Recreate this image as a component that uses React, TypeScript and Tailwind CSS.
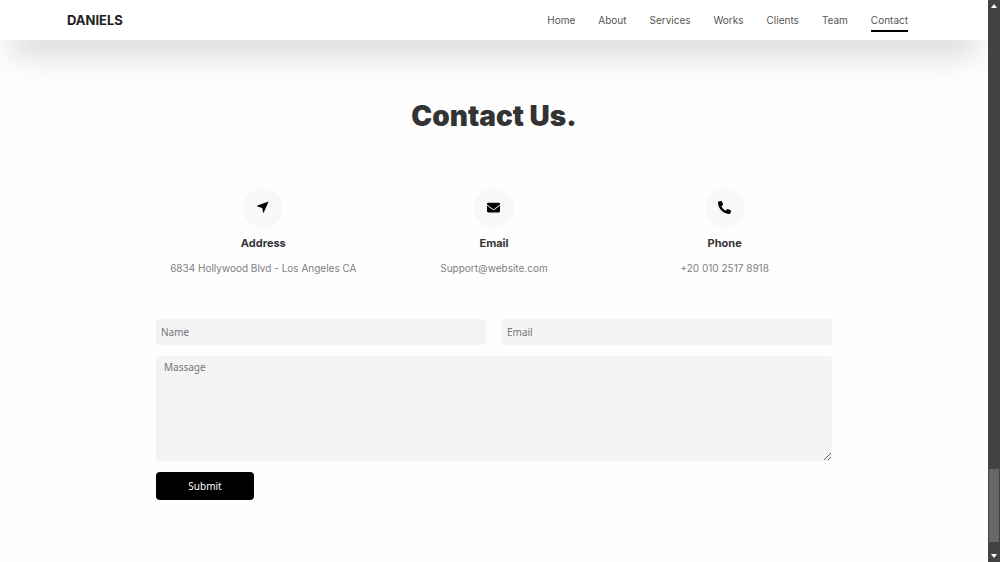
import type { ReactNode } from "react"
import { FaEnvelope, FaPhoneAlt } from "react-icons/fa"

const links = ["Home", "About", "Services", "Works", "Clients", "Team", "Contact"]

function Navbar() {
  return (
    <header className="sticky top-0 flex h-10 items-center justify-between bg-white pr-20 pl-[67px] shadow-[0_20px_34px_-12px_rgba(0,0,0,0.3)]">
      <a href="#home" className="text-[13px] leading-4 font-bold text-[#222]">
        DANIELS
      </a>
      <nav className="flex gap-[23px] text-[10px] text-[#555]">
        {links.map((link) => (
          <a
            key={link}
            href={`#${link.toLowerCase()}`}
            className={
              link === "Contact"
                ? "relative leading-4 after:absolute after:inset-x-0 after:top-[18px] after:h-[2px] after:bg-black"
                : "leading-4"
            }
          >
            {link}
          </a>
        ))}
      </nav>
    </header>
  )
}

function ArrowIcon() {
  return (
    <svg className="size-3" viewBox="0 0 12 12" fill="currentColor">
      <path d="M11.6.4 6.9 11.3Q6.4 12 6 11.2L5.3 6.9.5 5.6Q-.2 5.1.6 4.6Z" />
    </svg>
  )
}

function InfoCard({ icon, title, text }: { icon: ReactNode; title: string; text: string }) {
  return (
    <div className="flex flex-col items-center text-center">
      <div className="flex size-10 items-center justify-center rounded-full bg-[#f8f8fa] pb-[2px] text-black">
        {icon}
      </div>
      <h3 className="mt-[7px] text-[11px] leading-4 font-bold text-[#333]">{title}</h3>
      <p className="mt-[9px] text-[10px] leading-4 text-[#808080]">{text}</p>
    </div>
  )
}

function ContactForm() {
  const field = "w-full rounded bg-[#f4f3f6] font-['Noto_Sans'] text-[10px] placeholder:text-[#757575] outline-none"

  return (
    <form className="mt-[43px] grid grid-cols-2 gap-x-4 gap-y-[11px]">
      <input type="text" placeholder="Name" aria-label="Name" className={`${field} h-[26px] px-[5px]`} />
      <input type="email" placeholder="Email" aria-label="Email" className={`${field} h-[26px] px-[5px]`} />
      <textarea
        placeholder="Massage"
        aria-label="Massage"
        className={`${field} col-span-2 block h-[105px] resize px-2 py-[3px] leading-4`}
      />
      <button
        type="submit"
        className="h-7 w-[98px] rounded bg-black font-['Noto_Sans'] text-[10px] text-white"
      >
        Submit
      </button>
    </form>
  )
}

function Scrollbar() {
  return (
    <div aria-hidden="true" className="sticky top-0 flex h-screen w-3 shrink-0 flex-col items-center bg-[#424242] py-1">
      <svg className="h-1 w-2 shrink-0" viewBox="0 0 8 4" fill="#fff">
        <path d="M4 0 7 4H1z" />
      </svg>
      <div className="grow" />
      <div className="h-[73px] w-[10px] bg-[#686868]" />
      <svg className="mt-3 h-1 w-2 shrink-0" viewBox="0 0 8 4" fill="#fff">
        <path d="M4 4 7 0H1z" />
      </svg>
    </div>
  )
}

export default function App() {
  return (
    <div className="flex min-h-screen bg-[#fefefe] font-['Inter',sans-serif]">
      <div className="min-w-0 grow">
        <Navbar />
        <main id="contact" className="mx-auto max-w-[676px] pt-14 pb-16">
          <h2 className="text-center text-[28px] leading-10 font-black text-[#333]">Contact Us.</h2>
          <div className="mt-[52px] grid grid-cols-3 gap-4">
            <InfoCard icon={<ArrowIcon />} title="Address" text="6834 Hollywood Blvd - Los Angeles CA" />
            <InfoCard icon={<FaEnvelope className="size-[13px]" />} title="Email" text="Support@website.com" />
            <InfoCard icon={<FaPhoneAlt className="size-[13px]" />} title="Phone" text="+20 010 2517 8918" />
          </div>
          <ContactForm />
        </main>
      </div>
      <Scrollbar />
    </div>
  )
}
